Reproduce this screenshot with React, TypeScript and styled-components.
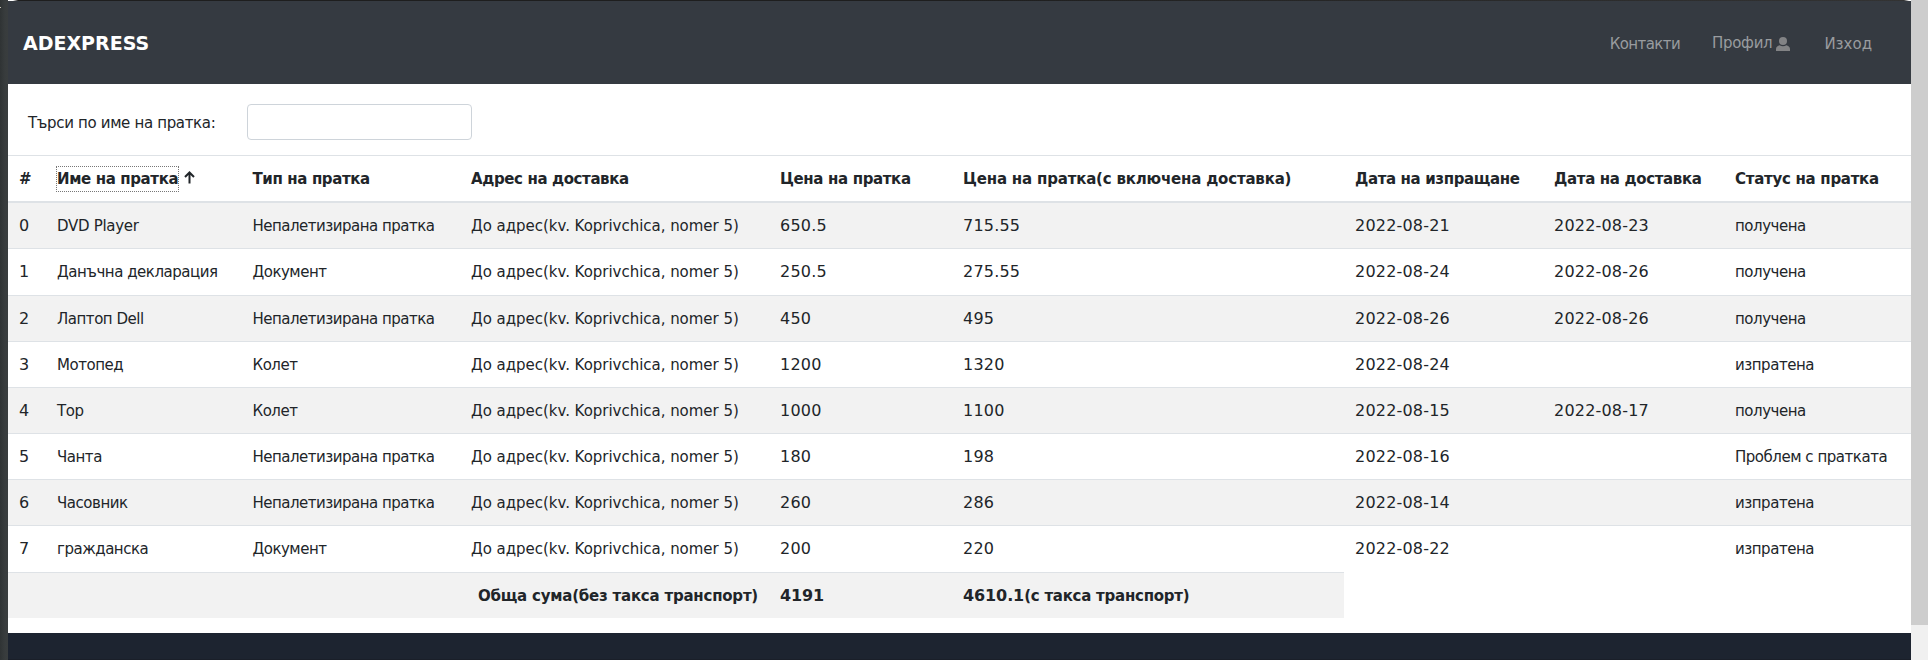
import React, { useState } from 'react';
import styled, { createGlobalStyle, css } from 'styled-components';

const GlobalStyle = createGlobalStyle`
  * { box-sizing: border-box; }
  body {
    margin: 0;
    overflow: hidden;
    background: #fff;
    color: #212529;
    font: 15px/24px 'DejaVu Sans', Verdana, sans-serif;
  }
`;

const Screen = styled.div`
  display: flex;
  width: 1928px;
  height: 660px;
  overflow: hidden;
`;

const LeftEdge = styled.div`
  width: 8px;
  background: linear-gradient(90deg, #2f3334 0, #383c3d 5px, #393d3e 8px);
  padding-top: 7px;
  &::before {
    content: '';
    display: block;
    width: 1px;
    height: 1px;
    background: #c9c6b8;
  }
`;

const Page = styled.div`
  width: 1903px;
  display: flex;
  flex-direction: column;
`;

const WindowEdge = styled.div`
  height: 1px;
  background: linear-gradient(90deg, #fff 0, #fff 5px, #1e1e1e 10px, #1e1e1e 50%, #333 1896px, #fff 1901px);
`;

const Scrollbar = styled.div`
  width: 17px;
  background: #f0f0f0;
`;

const ScrollThumb = styled.div`
  height: 625px;
  background: #cdcdcd;
`;

const Navbar = styled.nav`
  height: 83px;
  padding: 2px 39px 0 15px;
  display: flex;
  align-items: center;
  background: #353a41;
`;

const Brand = styled.a`
  flex: 1;
  padding-bottom: 2px;
  font: bold 19px/28px 'DejaVu Sans', Verdana, sans-serif;
  color: #fff;
`;

const NavLink = styled.a<{ $gap?: number; $raised?: boolean; $spacing: number }>`
  display: flex;
  align-items: center;
  margin-left: ${p => p.$gap ?? 0}px;
  padding-bottom: ${p => (p.$raised ? 2 : 0)}px;
  letter-spacing: ${p => p.$spacing}px;
  color: #999c9f;
`;

const UserIcon = styled.svg`
  width: 14px;
  height: 14px;
  margin: 2px 0 0 4px;
  fill: #828385;
`;

const SearchBar = styled.form`
  height: 71px;
  padding: 20px 0 0 20px;
  display: flex;
`;

const SearchLabel = styled.label`
  width: 219px;
  line-height: 38px;
  letter-spacing: -0.34px;
`;

const SearchInput = styled.input`
  width: 225px;
  height: 36px;
  padding: 6px 12px;
  border: 1px solid #ced4da;
  border-radius: 4px;
  font: inherit;
  background: #fff;
`;

const Table = styled.table`
  width: 1903px;
  table-layout: fixed;
  border-collapse: separate;
  border-spacing: 0;
`;

const Col = styled.col<{ $width: number }>`
  width: ${p => p.$width}px;
`;

const cell = css`
  padding: 0 0 0 12px;
  text-align: left;
  vertical-align: middle;
  white-space: nowrap;
  &:first-child, &:nth-child(7) { padding-left: 11px; }
`;

const HeadCell = styled.th<{ $spacing?: number }>`
  ${cell}
  height: 48px;
  border-top: 1px solid #dee2e6;
  border-bottom: 2px solid #dee2e6;
  letter-spacing: ${p => p.$spacing ?? 0}px;
`;

const HeadContent = styled.span`
  display: flex;
  align-items: center;
`;

const SortButton = styled.span<{ $active?: boolean }>`
  outline: ${p => (p.$active ? '1px dotted #777' : 'none')};
  cursor: pointer;
`;

const SortArrow = styled.svg`
  width: 11px;
  height: 13px;
  margin: -3px 0 0 6px;
  fill: none;
  stroke: #212529;
  stroke-width: 2;
`;

const Row = styled.tr<{ $height: number; $first?: boolean }>`
  height: ${p => p.$height}px;
  &:nth-child(odd) { background: #f2f2f2; }
  td { border-top: ${p => (p.$first ? '0' : '1px solid #dee2e6')}; }
`;

const Cell = styled.td<{ $spacing?: number }>`
  ${cell}
  letter-spacing: ${p => p.$spacing ?? -0.4}px;
`;

const NumberCell = styled(Cell)`
  font-size: 16px;
  letter-spacing: 0.2px;
`;

const TotalCell = styled.th<{ $right?: boolean; $spacing?: number }>`
  ${cell}
  height: 46px;
  border-top: 1px solid #dee2e6;
  background: #f2f2f2;
  letter-spacing: ${p => p.$spacing ?? 0}px;
  ${p => p.$right && css`
    text-align: right;
    padding-right: 10px;
  `}
`;

const WideDigits = styled.span`
  font-size: 16px;
  letter-spacing: -0.1px;
`;

const Footer = styled.footer`
  margin-top: auto;
  height: 27px;
  background: #1d2430;
  border-bottom: 1px solid #1a1f29;
`;

const widths = [37, 195.5, 218.5, 309, 183, 393, 198, 181, 188];

const headings: [string, number][] = [
  ['#', 0],
  ['Име на пратка', -0.38],
  ['Тип на пратка', -0.38],
  ['Адрес на доставка', -0.39],
  ['Цена на пратка', -0.36],
  ['Цена на пратка(с включена доставка)', -0.19],
  ['Дата на изпращане', -0.38],
  ['Дата на доставка', -0.35],
  ['Статус на пратка', -0.28],
];

const ADDRESS = 'До адрес(kv. Koprivchica, nomer 5)';

interface Shipment {
  name: string;
  type: string;
  price: string;
  total: string;
  sent: string;
  delivered: string;
  status: string;
  height: number;
}

const shipments: Shipment[] = [
  { name: 'DVD Player', type: 'Непалетизирана пратка', price: '650.5', total: '715.55', sent: '2022-08-21', delivered: '2022-08-23', status: 'получена', height: 45 },
  { name: 'Данъчна декларация', type: 'Документ', price: '250.5', total: '275.55', sent: '2022-08-24', delivered: '2022-08-26', status: 'получена', height: 47 },
  { name: 'Лаптоп Dell', type: 'Непалетизирана пратка', price: '450', total: '495', sent: '2022-08-26', delivered: '2022-08-26', status: 'получена', height: 46 },
  { name: 'Мотопед', type: 'Колет', price: '1200', total: '1320', sent: '2022-08-24', delivered: '', status: 'изпратена', height: 46 },
  { name: 'Тор', type: 'Колет', price: '1000', total: '1100', sent: '2022-08-15', delivered: '2022-08-17', status: 'получена', height: 46 },
  { name: 'Чанта', type: 'Непалетизирана пратка', price: '180', total: '198', sent: '2022-08-16', delivered: '', status: 'Проблем с пратката', height: 46 },
  { name: 'Часовник', type: 'Непалетизирана пратка', price: '260', total: '286', sent: '2022-08-14', delivered: '', status: 'изпратена', height: 46 },
  { name: 'гражданска', type: 'Документ', price: '200', total: '220', sent: '2022-08-22', delivered: '', status: 'изпратена', height: 47 },
];

export default function App() {
  const [query, setQuery] = useState('');
  return (
    <Screen>
      <GlobalStyle />
      <LeftEdge />
      <Page>
        <WindowEdge />
        <Navbar>
          <Brand>ADEXPRESS</Brand>
          <NavLink $spacing={-0.6}>Контакти</NavLink>
          <NavLink $gap={32} $spacing={-0.3} $raised>
            Профил
            <UserIcon viewBox="0 0 14 14">
              <circle cx="7" cy="4" r="4" />
              <path d="M0 14v-2C0 9.800 2 8.500 3.600 8.200 5.800 9.500 8.200 9.500 10.400 8.200 12 8.500 14 9.800 14 12V14z" />
            </UserIcon>
          </NavLink>
          <NavLink $gap={34} $spacing={0}>Изход</NavLink>
        </Navbar>
        <SearchBar>
          <SearchLabel htmlFor="search">Търси по име на пратка:</SearchLabel>
          <SearchInput id="search" value={query} onChange={e => setQuery(e.target.value)} />
        </SearchBar>
        <Table>
          <colgroup>
            {widths.map((w, i) => <Col key={i} $width={w} />)}
          </colgroup>
          <thead>
            <tr>
              {headings.map(([label, spacing], i) => (
                <HeadCell key={label} $spacing={spacing}>
                  <HeadContent>
                    <SortButton $active={i === 1}>{label}</SortButton>
                    {i === 1 && (
                      <SortArrow viewBox="0 0 11 13">
                        <path d="M5.500 12.500V1.500M1 6L5.500 1.500L10 6" />
                      </SortArrow>
                    )}
                  </HeadContent>
                </HeadCell>
              ))}
            </tr>
          </thead>
          <tbody>
            {shipments.map((s, i) => (
              <Row key={s.name} $height={s.height} $first={i === 0}>
                <NumberCell>{i}</NumberCell>
                <Cell $spacing={i === 0 ? -0.3 : -0.47}>{s.name}</Cell>
                <Cell $spacing={-0.5}>{s.type}</Cell>
                <Cell $spacing={-0.03}>{ADDRESS}</Cell>
                <NumberCell>{s.price}</NumberCell>
                <NumberCell>{s.total}</NumberCell>
                <NumberCell>{s.sent}</NumberCell>
                <NumberCell>{s.delivered}</NumberCell>
                <Cell $spacing={-0.47}>{s.status}</Cell>
              </Row>
            ))}
          </tbody>
          <tfoot>
            <tr>
              <TotalCell colSpan={4} $right $spacing={-0.22}>Обща сума(без такса транспорт)</TotalCell>
              <TotalCell><WideDigits>4191</WideDigits></TotalCell>
              <TotalCell $spacing={-0.25}><WideDigits>4610.1</WideDigits>(с такса транспорт)</TotalCell>
            </tr>
          </tfoot>
        </Table>
        <Footer />
      </Page>
      <Scrollbar>
        <ScrollThumb />
      </Scrollbar>
    </Screen>
  );
}
